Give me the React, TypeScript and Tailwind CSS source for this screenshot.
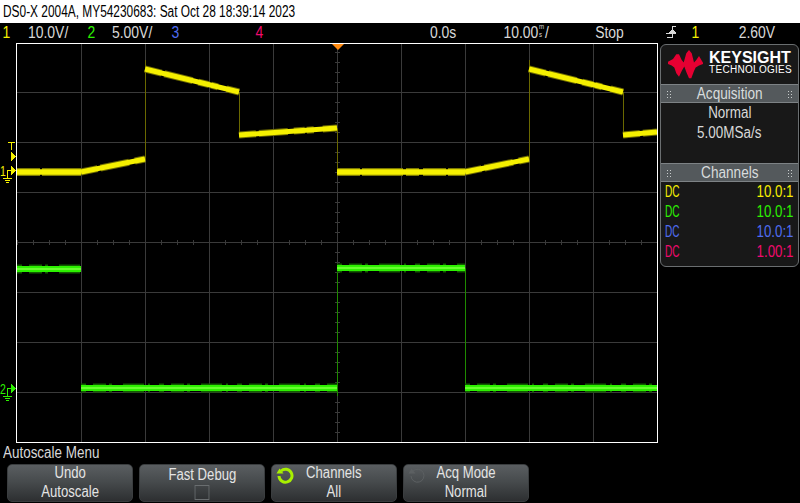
const gridX = [81, 145, 209, 273, 337, 401, 465, 529, 593];
const gridY = [92, 142, 192, 242, 292, 342, 392];
const ticksX = Array.from({ length: 41 }, (_, i) => 17 + i * 16 + 0.5);
const ticksY = Array.from({ length: 39 }, (_, i) => 52 + i * 10);

const yellowPath = 'M145 69L239 92M239 135L337 128M529 69L623 92M623 135L657 132M81 172L145 159M465 172L529 159';
const yellowFlat = 'M17 172H81M337 172H465';
const greenPath = 'M17 269H81M81 388H337M337 268H465M465 388H657';

function Narrow({ children, s = 0.84, className = '' }: { children?: React.ReactNode; s?: number; className?: string }) {
  return (
    <span className={`inline-block whitespace-nowrap ${className}`} style={{ transform: `scaleX(${s})` }}>
      {children}
    </span>
  );
}

function StatusItem({ w, className = '', children, s = 0.87 }: { w: string; className?: string; children?: React.ReactNode; s?: number }) {
  return (
    <div className={`${w} ${className} shrink-0 flex justify-center`}>
      <Narrow s={s}>{children}</Narrow>
    </div>
  );
}

function Plot() {
  return (
    <svg viewBox="17 44 640 398" className="block w-[640px] h-[398px]" shapeRendering="crispEdges">
      {gridX.map((x) => (
        <line key={x} x1={x + 0.5} x2={x + 0.5} y1={44} y2={442} stroke="#3a3a3a" />
      ))}
      {gridY.map((y) => (
        <line key={y} x1={17} x2={657} y1={y + 0.5} y2={y + 0.5} stroke="#3a3a3a" />
      ))}
      {ticksX.map((x) => (
        <line key={x} x1={x} x2={x} y1={240} y2={245} stroke="#3a3a3a" />
      ))}
      {ticksY.map((y) => (
        <line key={y} x1={335} x2={340} y1={y + 0.5} y2={y + 0.5} stroke="#3a3a3a" />
      ))}

      {/* dim edges */}
      <g stroke="#6a6800" strokeWidth="1">
        <line x1="145.5" x2="145.5" y1="60" y2="160" />
        <line x1="239.5" x2="239.5" y1="92" y2="135" />
        <line x1="337.5" x2="337.5" y1="128" y2="172" />
        <line x1="529.5" x2="529.5" y1="60" y2="160" />
        <line x1="623.5" x2="623.5" y1="92" y2="135" />
      </g>
      <g stroke="#1f8a00" strokeWidth="1">
        <line x1="337.5" x2="337.5" y1="268" y2="396" />
        <line x1="465.5" x2="465.5" y1="268" y2="388" />
      </g>

      {/* traces, noise underneath */}
      <g fill="none" shapeRendering="auto">
        <path d={yellowPath} stroke="#6f6c00" strokeWidth="7" strokeDasharray="17 3 29 6 11 2 7 9" />
        <path d={yellowFlat} stroke="#7c7900" strokeWidth="8" strokeDasharray="23 2 41 3 13 4" />
        <path d={yellowPath} stroke="#f5f000" strokeWidth="5" />
        <path d={yellowFlat} stroke="#f5f000" strokeWidth="5.5" />
        <path d={greenPath} stroke="#125c00" strokeWidth="9" strokeDasharray="5 7 13 3 3 11 21 4 2 9" />
        <path d={greenPath} stroke="#2cf000" strokeWidth="6" />
        <path d={greenPath} stroke="#7cff40" strokeWidth="1.5" />
      </g>
    </svg>
  );
}

function Marker({ color, className, label }: { color: string; className: string; label: string }) {
  return (
    <div className={`absolute left-0 w-[16px] h-[24px] ${className}`}>
      <span
        className="absolute left-0 top-[-1px] text-[14px] leading-[14px]"
        style={{ color, transform: 'scaleX(0.75)', transformOrigin: 'left' }}
      >
        {label}
      </span>
      <svg viewBox="0 0 16 24" className="absolute inset-0 w-[16px] h-[24px]" shapeRendering="crispEdges">
        <path d="M7 13V5.5H11" stroke={color} fill="none" />
        <path d="M11 0.5L16 5.5L11 10.5Z" fill={color} />
        <path d="M3 13.5H12M5 15.5H10M6 17.5H9" stroke={color} fill="none" />
      </svg>
    </div>
  );
}

function SoftKey({ top, bottom, icon }: { top: React.ReactNode; bottom: React.ReactNode; icon?: React.ReactNode }) {
  return (
    <div className="relative w-[126px] h-[38px] rounded-[5px] border border-[#3a3d3f] bg-gradient-to-b from-[#5a5e61] via-[#45494b] to-[#2d2f31] flex flex-col items-center justify-center text-[#e4e4e4] text-[16px] leading-[19px] pb-[2px]">
      {icon}
      <Narrow s={0.82} className="shrink-0">{top}</Narrow>
      <Narrow s={0.82} className="shrink-0">{bottom}</Narrow>
    </div>
  );
}

function Cycle({ color, width }: { color: string; width: number }) {
  return (
    <svg viewBox="0 0 18 18" className="absolute left-[4px] top-[1px] w-[18px] h-[18px]">
      <path d="M5 5A6.5 6.5 0 1 1 3 10" fill="none" stroke={color} strokeWidth={width} />
      <path d="M0.5 7.5H7.5L3.5 2.5Z" fill={color} />
    </svg>
  );
}

function PanelTitle({ children }: { children: React.ReactNode }) {
  return (
    <div className="h-[19px] shrink-0 bg-[#54595c] border-y border-[#7d8285] flex items-center justify-between px-[5px] text-[#d8dcdc] text-[16px]">
      <Dots />
      <Narrow s={0.85}>{children}</Narrow>
      <Dots />
    </div>
  );
}

function Dots() {
  return <div className="w-[6px] h-[8px] bg-[radial-gradient(#c8cccc_0.7px,transparent_0.9px)] bg-[length:3px_3px]" />;
}

function ChannelRow({ color, ratio }: { color: string; ratio: string }) {
  return (
    <div className={`flex justify-between h-[20px] items-center pl-[4px] pr-[5px] text-[16px] ${color}`}>
      <Narrow s={0.63} className="origin-left">DC</Narrow>
      <Narrow s={0.83} className="origin-right">{ratio}</Narrow>
    </div>
  );
}

export default function App() {
  return (
    <div className="w-[800px] h-[503px] bg-black overflow-hidden font-['Liberation_Sans',sans-serif] flex flex-col">
      <div className="h-[23px] bg-white text-black text-[16px] leading-[23px] pl-[3px]">
        <Narrow s={0.743} className="origin-left">DS0-X 2004A, MY54230683: Sat Oct 28 18:39:14 2023</Narrow>
      </div>

      <div className="h-[20px] flex items-center text-[16px] text-[#d8d8d8]">
        <StatusItem w="w-[13px]" className="text-[#f5f000]">1</StatusItem>
        <StatusItem w="w-[70px]">10.0V/</StatusItem>
        <StatusItem w="w-[17px]" className="text-[#2cf000]">2</StatusItem>
        <StatusItem w="w-[64px]">5.00V/</StatusItem>
        <StatusItem w="w-[23px]" className="text-[#4f6cf0]">3</StatusItem>
        <div className="w-[61px] shrink-0" />
        <StatusItem w="w-[23px]" className="text-[#f00a6e]">4</StatusItem>
        <div className="w-[142px] shrink-0" />
        <StatusItem w="w-[60px]">0.0s</StatusItem>
        <StatusItem w="w-[107px]">
          10.00
          <span className="inline-flex flex-col align-top text-[7px] leading-[8px] pt-[2px] px-[1px]">
            <span>m</span>
            <span>s</span>
          </span>
          /
        </StatusItem>
        <StatusItem w="w-[58px]">Stop</StatusItem>
        <div className="w-[17px] shrink-0" />
        <div className="w-[31px] shrink-0 flex justify-center -mt-[2px]">
          <svg viewBox="0 0 12 14" className="w-[12px] h-[14px]" shapeRendering="crispEdges">
            <path d="M8 1.5H11M7.5 1V13M2 12.5H7M1 8.5H11" stroke="#d8d8d8" fill="none" />
            <path d="M4 8L7.5 4L11 8Z" fill="#d8d8d8" />
          </svg>
        </div>
        <StatusItem w="w-[19px]" className="text-[#f5f000]">1</StatusItem>
        <StatusItem w="w-[95px]" className="pl-[9px]">2.60V</StatusItem>
      </div>

      <div className="flex h-[400px]">
        <div className="relative w-[16px] shrink-0">
          <svg viewBox="0 0 16 30" className="absolute left-0 top-[99px] w-[16px] h-[30px]" shapeRendering="crispEdges">
            <path d="M8 0.5H15M11.5 0V8" stroke="#f5f000" fill="none" />
            <path d="M11 10L16 14.5L11 19Z" fill="#f5f000" />
          </svg>
          <Marker color="#f5f000" className="top-[122px]" label="1" />
          <Marker color="#2cf000" className="top-[340px]" label="2" />
        </div>
        <div className="relative w-[642px] h-[400px] border border-white shrink-0">
          <Plot />
          <div className="absolute left-[315px] top-0 w-0 h-0 border-x-[6px] border-x-transparent border-t-[6px] border-t-[#ff8a10]" />
        </div>
        <div className="ml-[2px] w-[139px] h-[223px] mt-[1px] rounded-[6px] border border-[#6a6e70] bg-[#181818] flex flex-col overflow-hidden">
          <div className="h-[39px] flex items-center pl-[7px] gap-[6px] shrink-0">
            <svg viewBox="0 0 35 28.5" className="w-[35px] h-[28.5px] shrink-0">
              <path
                d="M0 11.7L5 9L8.3 4.3L11 4.3L13.7 10L15.7 12.5L18.3 3.3L21 0L23.7 3.3L26 12.5L28.3 10L31 6L35 12.7L35 14L31 15.5L27.7 17.5L26 21L23.3 28.3L21 28.3L18.3 22L16.3 16.5L13.7 21L11 26.7L8.3 23.3L6.3 17.5L3.7 15.5L0 14Z"
                fill="#e60032"
              />
            </svg>
            <div className="flex flex-col text-white pb-[4px]">
              <Narrow s={0.97} className="origin-left text-[16.5px] font-bold leading-[14px]">KEYSIGHT</Narrow>
              <span className="text-[10px] leading-[11px] tracking-[0.3px]">TECHNOLOGIES</span>
            </div>
          </div>
          <PanelTitle>Acquisition</PanelTitle>
          <div className="h-[60px] shrink-0 flex flex-col items-center text-[#d8d8d8] text-[16px] leading-[20px]">
            <Narrow s={0.84}>Normal</Narrow>
            <Narrow s={0.84}>5.00MSa/s</Narrow>
          </div>
          <PanelTitle>Channels</PanelTitle>
          <ChannelRow color="text-[#f5f000]" ratio="10.0:1" />
          <ChannelRow color="text-[#2cf000]" ratio="10.0:1" />
          <ChannelRow color="text-[#4f6cf0]" ratio="10.0:1" />
          <ChannelRow color="text-[#f00a6e]" ratio="1.00:1" />
        </div>
      </div>

      <div className="h-[20px] text-[#d8d8d8] text-[16px] leading-[20px] pl-[3px]">
        <Narrow s={0.84} className="origin-left">Autoscale Menu</Narrow>
      </div>
      <div className="flex gap-[6px] pl-[7px] mt-[1px]">
        <SoftKey top="Undo" bottom="Autoscale" />
        <SoftKey
          top="Fast Debug"
          bottom={<span className="block w-[18px] h-[15px] border border-[#6a6e70] mt-[1px]" />}
        />
        <SoftKey top="Channels" bottom="All" icon={<Cycle color="#a8f000" width={3} />} />
        <SoftKey top="Acq Mode" bottom="Normal" icon={<Cycle color="#5c6062" width={1} />} />
      </div>
    </div>
  );
}
